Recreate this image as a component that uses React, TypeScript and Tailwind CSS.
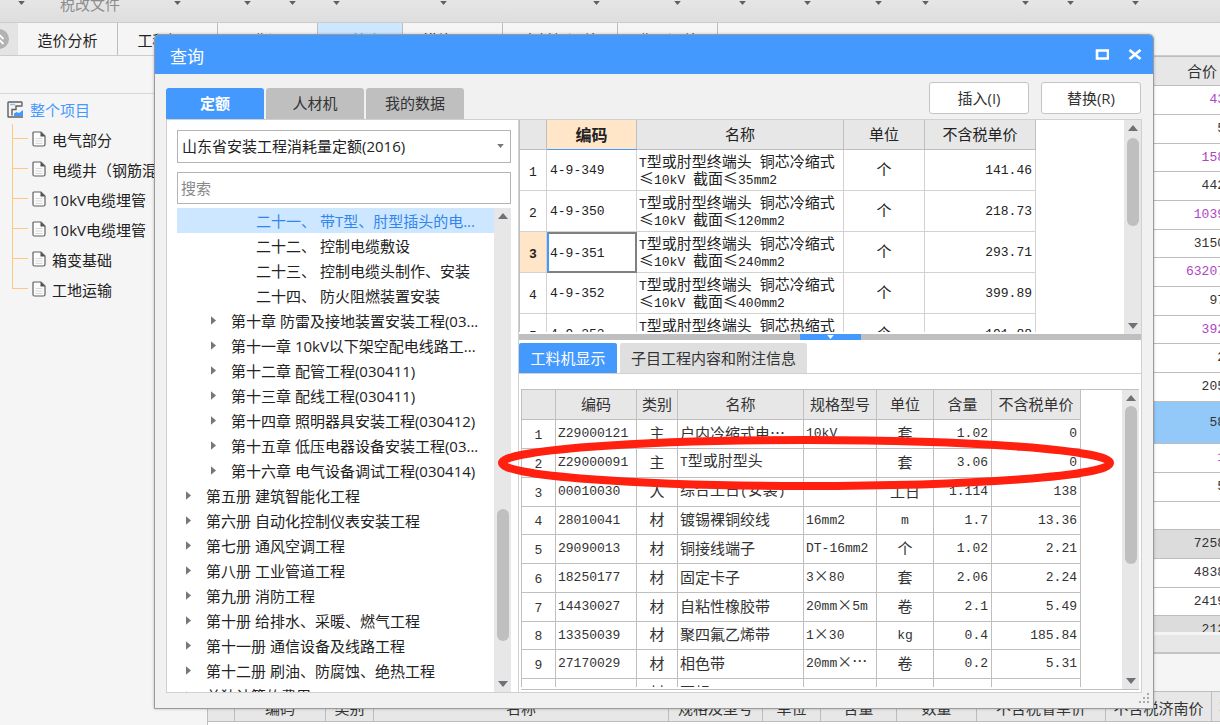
import React, { type ReactNode } from 'react';

const UI = "font-['Open_Sans','Noto_Sans_CJK_SC',sans-serif]";

/** Sets Latin runs in the narrow monospaced face and keeps CJK runs full width. */
function Mixed({ text }: { text: string }) {
  const runs = text.match(/[\x20-\x7e]+|[^\x20-\x7e]+/g) ?? [];
  return (
    <>
      {runs.map((run, i) =>
        /^[\x20-\x7e]/.test(run) ? (
          <span key={i} className="font-['Liberation_Mono',monospace] text-[13px] whitespace-pre">{run}</span>
        ) : (
          <span key={i} lang="zh-CN" className="font-['Noto_Sans_CJK_SC',sans-serif] text-[15px]">{run}</span>
        ),
      )}
    </>
  );
}

function Triangle({ dir, className = '' }: { dir: 'up' | 'down' | 'right'; className?: string }) {
  const d = dir === 'up' ? 'M0 6 5 0 10 6Z' : dir === 'down' ? 'M0 0H10L5 6Z' : 'M0 0V10L6 5Z';
  return (
    <svg viewBox={dir === 'right' ? '0 0 6 10' : '0 0 10 6'} className={className} fill="currentColor" aria-hidden="true">
      <path d={d} />
    </svg>
  );
}

function ScrollBar({ children }: { children: ReactNode }) {
  return (
    <div className="flex w-[17px] shrink-0 flex-col items-center bg-[#e7e7e7] py-[5px] text-[#707078]">
      <Triangle dir="up" className="h-[6px] w-[10px] shrink-0" />
      <div className="flex w-full flex-1 flex-col items-center">{children}</div>
      <Triangle dir="down" className="h-[6px] w-[10px] shrink-0" />
    </div>
  );
}

function PageIcon() {
  return (
    <svg viewBox="0 0 14 16" className="h-4 w-[14px] shrink-0" fill="none" aria-hidden="true">
      <path d="M1.500 1H9L13 5V13.500Q13 15 11.500 15H2.500Q1 15 1 13.500V2Q1 1 2 1Z" fill="#fbfbfb" stroke="#606060" strokeWidth="1.200" />
      <path d="M8.500 1V5.500H13Z" fill="#505050" />
      <path d="M3.500 7.500H10.500M3.500 10H10.500M3.500 12.500H10.500" stroke="#d8d8d8" />
    </svg>
  );
}

function ProjectIcon() {
  return (
    <svg viewBox="0 0 17 17" className="h-[17px] w-[17px] shrink-0" fill="none" aria-hidden="true">
      <path d="M15 4.500V1.500Q15 1 14.500 1H1.500Q1 1 1 1.500V15.500Q1 16 1.500 16H16" stroke="#606060" strokeWidth="1.400" />
      <path d="M3 3.500H8" stroke="#8cc0ff" strokeWidth="1.500" />
      <path d="M5 14.500V8.500H9V5H15.500" stroke="#606060" strokeWidth="1.400" />
      <path d="M7 15V12.500L9.500 11 12 12 16 9V15Z" fill="#4499ff" />
    </svg>
  );
}

const toolbarCells = ['', '税改文件', '', '', '', '', '', '', '', '', '', '', '', '', ''];

const moduleTabs = [
  { label: '造价分析', width: 'w-[100px]' },
  { label: '工程概况', width: 'w-[100px]' },
  { label: '取费设置', width: 'w-[100px]' },
  { label: '预算书', width: 'w-[85px]', active: true },
  { label: '措施项目', width: 'w-[100px]' },
  { label: '人材机汇总', width: 'w-[115px]' },
  { label: '费用汇总', width: 'w-[100px]' },
];

const projectNodes = ['电气部分', '电缆井（钢筋混', '10kV电缆埋管', '10kV电缆埋管', '箱变基础', '工地运输'];

const totals: { v: string; kind?: 'purple' | 'active' | 'sum' }[] = [
  { v: '43', kind: 'purple' }, { v: '5' }, { v: '158', kind: 'purple' }, { v: '442' },
  { v: '1039', kind: 'purple' }, { v: '3150' }, { v: '63207', kind: 'purple' }, { v: '97' },
  { v: '392', kind: 'purple' }, { v: '2' }, { v: '205' }, { v: '58', kind: 'active' },
  { v: '1', kind: 'purple' }, { v: '5' }, { v: '' }, { v: '7258', kind: 'sum' },
  { v: '4838' }, { v: '2419' }, { v: '212', kind: 'sum' },
];

const chapters: { level: 1 | 2 | 3; text: string; selected?: boolean }[] = [
  { level: 3, text: '二十一、 带T型、肘型插头的电...', selected: true },
  { level: 3, text: '二十二、 控制电缆敷设' },
  { level: 3, text: '二十三、 控制电缆头制作、安装' },
  { level: 3, text: '二十四、 防火阻燃装置安装' },
  { level: 2, text: '第十章 防雷及接地装置安装工程(03...' },
  { level: 2, text: '第十一章 10kV以下架空配电线路工...' },
  { level: 2, text: '第十二章 配管工程(030411)' },
  { level: 2, text: '第十三章 配线工程(030411)' },
  { level: 2, text: '第十四章 照明器具安装工程(030412)' },
  { level: 2, text: '第十五章 低压电器设备安装工程(03...' },
  { level: 2, text: '第十六章 电气设备调试工程(030414)' },
  { level: 1, text: '第五册 建筑智能化工程' },
  { level: 1, text: '第六册 自动化控制仪表安装工程' },
  { level: 1, text: '第七册 通风空调工程' },
  { level: 1, text: '第八册 工业管道工程' },
  { level: 1, text: '第九册 消防工程' },
  { level: 1, text: '第十册 给排水、采暖、燃气工程' },
  { level: 1, text: '第十一册 通信设备及线路工程' },
  { level: 1, text: '第十二册 刷油、防腐蚀、绝热工程' },
  { level: 1, text: '单独计算的费用' },
];

const indent = { 1: 'pl-[9px]', 2: 'pl-[34px]', 3: 'pl-[59px]' };

const quotas = [
  ['4-9-349', 'T型或肘型终端头 铜芯冷缩式', '≤10kV 截面≤35mm2', '141.46'],
  ['4-9-350', 'T型或肘型终端头 铜芯冷缩式', '≤10kV 截面≤120mm2', '218.73'],
  ['4-9-351', 'T型或肘型终端头 铜芯冷缩式', '≤10kV 截面≤240mm2', '293.71'],
  ['4-9-352', 'T型或肘型终端头 铜芯冷缩式', '≤10kV 截面≤400mm2', '399.89'],
  ['4-9-353', 'T型或肘型终端头 铜芯热缩式', '≤10kV 截面≤35mm2', '191.88'],
];

const resources = [
  ['Z29000121', '主', '户内冷缩式电…', '10kV', '套', '1.02', '0'],
  ['Z29000091', '主', 'T型或肘型头', '', '套', '3.06', '0'],
  ['00010030', '人', '综合工日(安装)', '', '工日', '1.114', '138'],
  ['28010041', '材', '镀锡裸铜绞线', '16mm2', 'm', '1.7', '13.36'],
  ['29090013', '材', '铜接线端子', 'DT-16mm2', '个', '1.02', '2.21'],
  ['18250177', '材', '固定卡子', '3×80', '套', '2.06', '2.24'],
  ['14430027', '材', '自粘性橡胶带', '20mm×5m', '卷', '2.1', '5.49'],
  ['13350039', '材', '聚四氟乙烯带', '1×30', 'kg', '0.4', '185.84'],
  ['27170029', '材', '相色带', '20mm×…', '卷', '0.2', '5.31'],
  ['14030041', '材', '石规', '', 'kg', '1', '7.41'],
];

const detailHeads = ['', '编码', '类别', '名称', '规格及型号', '单位', '含量', '数量', '不含税省单价', '不含税济南价', '不'];
const detailCols = ['w-[27px]', 'w-[91px]', 'w-[48px]', 'w-[295px]', 'w-[94px]', 'w-[58px]', 'w-[76px]', 'w-[80px]', 'w-[129px]', 'w-[106px]', 'w-[30px]'];

function Toolbar() {
  return (
    <div className="grid h-[22px] shrink-0 grid-cols-[25px_156px_70px_45px_44px_107px_153px_81px_65px_65px_71px_47px_100px_45px_65px] overflow-hidden bg-linear-to-b from-[#e6e6e6] to-[#dedede] text-[#606060]">
      {toolbarCells.map((label, i) => (
        <div key={i} className="flex h-[9px] items-center justify-end">
          {label && <span className="flex-1 pl-[35px] text-[15px] leading-[9px] text-[#8c8c8c]">{label}</span>}
          <Triangle dir="down" className="mt-[-3px] h-[4px] w-[7px]" />
        </div>
      ))}
    </div>
  );
}

function ModuleTabs() {
  return (
    <nav className="flex h-[34px] shrink-0 border-y border-[#cccccc] bg-[#f5f5f5]">
      <button type="button" aria-label="收起" className="flex w-[18px] shrink-0 items-center justify-end bg-[#e4e4e4] pr-[9px]">
        <svg viewBox="0 0 20 20" className="h-5 w-5 shrink-0" aria-hidden="true">
          <circle cx="10" cy="10" r="10" fill="#b2b2b2" />
          <path d="M5.500 10 10 5.500 14.500 10M5.500 15 10 10.500 14.500 15" fill="none" stroke="#fff" strokeWidth="1.800" />
        </svg>
      </button>
      {moduleTabs.map((t) => (
        <button
          key={t.label}
          type="button"
          className={`${t.width} shrink-0 border-r border-[#bdbdbd] pt-[3px] text-[15px] ${t.active ? 'bg-[#cce7ff] text-[#4499ff]' : 'text-[#222]'}`}
        >
          {t.label}
        </button>
      ))}
    </nav>
  );
}

function ProjectTree() {
  return (
    <aside className="w-[207px] shrink-0 overflow-hidden bg-[#f5f5f5]">
      <div className="h-[38px] border-b border-[#d6d6d6]" />
      <div className="flex h-[30px] items-center gap-[6px] pl-[7px] text-[15px] text-[#4499ff]">
        <ProjectIcon />
        <a href="#project" className="pt-[2px]">整个项目</a>
      </div>
      <ul className="pl-3">
        {projectNodes.map((name, i) => (
          <li key={i} className="flex h-[30px] text-[15px] whitespace-nowrap text-[#222]">
            <span className="w-4 shrink-0">
              <span className="block h-[15px] border-b border-l border-[#ffc880]" />
              {i < projectNodes.length - 1 && <span className="block h-[15px] border-l border-[#ffc880]" />}
            </span>
            <button type="button" className="flex items-center gap-[6px] pl-1">
              <PageIcon />
              <span className="pt-[2px]">{name}</span>
            </button>
          </li>
        ))}
      </ul>
    </aside>
  );
}

function TotalsGrid() {
  return (
    <div className="min-h-0 flex-1 overflow-hidden bg-white">
      <table className="w-[calc(100%+30px)] table-fixed border-separate border-spacing-0">
        <colgroup>
          <col />
          <col className="w-[96px]" />
        </colgroup>
        <thead>
          <tr className="h-[30px] bg-[#e7e7e7]">
            <th className="border-y border-[#bdbdbd]" />
            <th className="border-y border-[#bdbdbd] text-[15px] font-normal text-[#333]">合价</th>
          </tr>
        </thead>
        <tbody>
          {totals.map((r, i) => (
            <tr
              key={i}
              className={`${r.kind === 'active' ? 'h-[42px] bg-[#92c9f9]' : i % 3 === 2 ? 'h-[28px]' : 'h-[29px]'} ${r.kind === 'sum' ? 'bg-[#dcdcdc]' : ''} ${r.kind === 'purple' ? 'text-[#ad45c4]' : 'text-[#333]'}`}
            >
              <td className="border-b border-[#bdbdbd]" />
              <td className="border-b border-[#bdbdbd] pr-[25px] pb-[3px] text-right leading-5">
                <Mixed text={r.v} />
              </td>
            </tr>
          ))}
        </tbody>
      </table>
    </div>
  );
}

function DetailGrid() {
  return (
    <div className="h-[34px] shrink-0 overflow-hidden bg-white">
      <table className="w-[1034px] table-fixed border-separate border-spacing-0">
        <colgroup>
          {detailCols.map((w, i) => (
            <col key={i} className={w} />
          ))}
        </colgroup>
        <thead>
          <tr className="h-[31px] bg-[#e7e7e7]">
            {detailHeads.map((h, i) => (
              <th key={i} className="overflow-hidden border-y border-r border-[#bdbdbd] pt-[2px] text-[15px] leading-5 font-normal whitespace-nowrap text-[#333]">
                {h}
              </th>
            ))}
          </tr>
        </thead>
      </table>
    </div>
  );
}

function QuotaTree() {
  return (
    <section className="flex w-[352px] shrink-0 flex-col border-r border-[#d0d0d0] pt-[10px] pr-[7px] pl-[10px]">
      <label className="relative block">
        <span className="sr-only">定额库</span>
        <select className="h-[33px] w-full appearance-none border border-[#b4b4b4] bg-white pl-1 text-[15px] text-[#222]">
          <option>山东省安装工程消耗量定额(2016)</option>
        </select>
        <Triangle dir="down" className="absolute top-[14px] right-[7px] h-[4px] w-[7px] text-[#777]" />
      </label>
      <input
        aria-label="搜索"
        placeholder="搜索"
        className="mt-[9px] h-[32px] w-full border border-[#b4b4b4] bg-white pl-[3px] text-[15px] placeholder:text-[#888]"
      />
      <div className="mt-[4px] flex min-h-0 flex-1">
        <ul className="min-w-0 flex-1 overflow-hidden">
          {chapters.map((c) => (
            <li key={c.text} className={c.selected ? 'bg-[#cce7ff] text-[#3385ee]' : 'text-[#222]'}>
              <button type="button" className={`flex h-[25px] w-full items-center text-[15px] whitespace-nowrap ${indent[c.level]}`}>
                <span className="flex w-5 shrink-0">
                  {c.level < 3 && <Triangle dir="right" className="h-[9px] w-[5px] text-[#777]" />}
                </span>
                <span className="pt-[2px]">{c.text}</span>
              </button>
            </li>
          ))}
        </ul>
        <ScrollBar>
          <div className="flex-[22]" />
          <div className="w-[12px] flex-[10] rounded-full bg-[#bfbfbf]" />
          <div className="flex-[3]" />
        </ScrollBar>
      </div>
    </section>
  );
}

const line = 'border-r border-b border-[#d2d2d2]';
const head = 'border-r border-b border-[#bfbfbf] bg-[#e7e7e7] font-normal text-[15px] whitespace-nowrap';

function QuotaGrid() {
  return (
    <div className="flex h-[214px] shrink-0">
      <div className="mb-[2px] min-w-0 flex-1 overflow-hidden">
        <table className="w-[516px] table-fixed border-separate border-spacing-0 border-l border-[#bfbfbf] text-[#222]">
          <colgroup>
            <col className="w-[27px]" />
            <col className="w-[90px]" />
            <col className="w-[207px]" />
            <col className="w-[81px]" />
            <col className="w-[111px]" />
          </colgroup>
          <thead>
            <tr className="h-[30px]">
              <th className={head} />
              <th className="border-r border-b border-r-[#bfbfbf] border-b-[#4499ff] bg-[#ffe6c8] text-[16px] font-bold">编码</th>
              <th className={head}>名称</th>
              <th className={head}>单位</th>
              <th className={head}>不含税单价</th>
            </tr>
          </thead>
          <tbody>
            {quotas.map(([code, l1, l2, price], i) => (
              <tr key={code} className="h-[41px]">
                <td className={`${line} text-center ${i === 2 ? 'bg-[#ffe6c8] font-bold' : ''}`}>
                  <Mixed text={String(i + 1)} />
                </td>
                <td className={`pb-[3px] ${i === 2 ? 'border-2 border-[#808080] border-l-[#4499ff] pl-px' : `${line} pl-[3px]`}`}>
                  <Mixed text={code} />
                </td>
                <td className={`${line} pb-[3px] pl-[2px] leading-[17px] whitespace-nowrap`}>
                  <div className="h-[17px]"><Mixed text={l1} /></div>
                  <div className="h-[17px]"><Mixed text={l2} /></div>
                </td>
                <td className={`${line} pb-[3px] text-center`}><Mixed text="个" /></td>
                <td className={`${line} pr-[3px] pb-[3px] text-right`}><Mixed text={price} /></td>
              </tr>
            ))}
          </tbody>
        </table>
      </div>
      <ScrollBar>
        <div className="mt-[7px] h-[88px] w-[12px] rounded-full bg-[#bfbfbf]" />
      </ScrollBar>
    </div>
  );
}

function ResourceGrid() {
  return (
    <div className="mx-[2px] mb-[2px] flex min-h-0 flex-1 border-y border-[#bfbfbf]">
      <div className="mb-[2px] min-w-0 flex-1 overflow-hidden">
        <table className="w-[559px] table-fixed border-separate border-spacing-0 border-l border-[#bfbfbf] text-[#333]">
          <colgroup>
            <col className="w-[34px]" />
            <col className="w-[81px]" />
            <col className="w-[41px]" />
            <col className="w-[126px]" />
            <col className="w-[73px]" />
            <col className="w-[57px]" />
            <col className="w-[58px]" />
            <col className="w-[89px]" />
          </colgroup>
          <thead>
            <tr className="h-[30px]">
              {['', '编码', '类别', '名称', '规格型号', '单位', '含量', '不含税单价'].map((h) => (
                <th key={h} className={head}>{h}</th>
              ))}
            </tr>
          </thead>
          <tbody>
            {resources.map((r, i) => (
              <tr key={r[0]} className={`${i % 4 === 3 ? 'h-[28px]' : 'h-[29px]'} leading-5 whitespace-nowrap`}>
                <td className="border-r border-b border-[#bfbfbf] text-center">
                  {i < 9 && <Mixed text={String(i + 1)} />}
                </td>
                {r.map((v, c) => (
                  <td
                    key={c}
                    className={`border-r border-b border-[#bfbfbf] pb-[3px] ${c === 1 || c === 4 ? 'text-center' : c > 4 ? 'pr-[3px] text-right' : 'pl-[2px]'}`}
                  >
                    <Mixed text={v} />
                  </td>
                ))}
              </tr>
            ))}
          </tbody>
        </table>
      </div>
      <ScrollBar>
        <div className="mt-[5px] h-[158px] w-[12px] rounded-full bg-[#bfbfbf]" />
      </ScrollBar>
    </div>
  );
}

function QueryDialog() {
  return (
    <div
      role="dialog"
      aria-label="查询"
      className="absolute top-[34px] right-[66px] bottom-[16px] left-[154px] flex flex-col overflow-hidden rounded-t-[5px] border border-[#9a9a9a] bg-[#f1f1f1] shadow-[0_0_3px_rgba(0,0,0,0.25)]"
    >
      <header className="flex h-[39px] shrink-0 items-center justify-between bg-[#4499ff] pr-[11px] pl-[15px] text-white">
        <h1 className="pt-1 text-[17px]">查询</h1>
        <div className="flex gap-[19px]">
          <button type="button" aria-label="最大化">
            <svg viewBox="0 0 14 12" className="h-3 w-[14px]" aria-hidden="true">
              <path d="M2 1.500H13V9.500H2Z" fill="none" stroke="#fff" strokeWidth="2.600" />
            </svg>
          </button>
          <button type="button" aria-label="关闭">
            <svg viewBox="0 0 14 12" className="h-3 w-[14px]" aria-hidden="true">
              <path d="M1.500 1 12.500 10M12.500 1 1.500 10" fill="none" stroke="#fff" strokeWidth="2.700" />
            </svg>
          </button>
        </div>
      </header>

      <div className="flex h-[45px] shrink-0 items-end justify-between pr-[12px] pl-[11px]">
        <div className="flex gap-[2px] text-[15px]">
          <button type="button" className="h-[31px] w-[98px] rounded-t-[3px] bg-[#4499ff] font-bold text-white">定额</button>
          <button type="button" className="h-[31px] w-[98px] rounded-t-[3px] bg-[#bfbfbf] text-[#333]">人材机</button>
          <button type="button" className="h-[31px] w-[98px] rounded-t-[3px] bg-[#bfbfbf] text-[#333]">我的数据</button>
        </div>
        <div className="flex gap-3 pb-[5px] text-[15px] text-[#333]">
          <button type="button" className="h-[32px] w-[100px] rounded-[3px] border border-[#c4c4c4] bg-white">插入(I)</button>
          <button type="button" className="h-[32px] w-[100px] rounded-[3px] border border-[#c4c4c4] bg-white">替换(R)</button>
        </div>
      </div>

      <div className="mx-[11px] mb-[15px] flex min-h-0 flex-1 border border-[#d0d0d0] bg-white">
        <QuotaTree />
        <section className="flex min-w-0 flex-1 flex-col">
          <QuotaGrid />
          <div className="flex h-[6px] shrink-0 justify-center bg-[#bfbfbf]">
            <div className="flex w-[61px] items-center justify-center bg-[#4499ff] text-white">
              <Triangle dir="down" className="h-[4px] w-[7px]" />
            </div>
          </div>
          <div className="mt-[3px] flex shrink-0 gap-[3px] border-b border-[#d0d0d0] text-[15px]">
            <button type="button" className="h-[30px] w-[98px] rounded-t-[2px] bg-[#4499ff] text-white">工料机显示</button>
            <button type="button" className="h-[30px] w-[187px] rounded-t-[2px] bg-[#dfdfdf] text-[#333]">子目工程内容和附注信息</button>
          </div>
          <div className="h-[15px] shrink-0" />
          <ResourceGrid />
        </section>
      </div>

      <svg viewBox="0 0 11 11" className="absolute right-[3px] bottom-[4px] h-[11px] w-[11px]" fill="#aaa" aria-hidden="true">
        <path d="M8 0h2v2H8zM8 4h2v2H8zM4 4h2v2H4zM8 8h2v2H8zM4 8h2v2H4zM0 8h2v2H0z" />
      </svg>
    </div>
  );
}

export default function App() {
  return (
    <div lang="zh-CN" className={`relative flex h-screen w-full flex-col overflow-hidden bg-[#f5f5f5] ${UI}`}>
      <Toolbar />
      <ModuleTabs />
      <div className="flex min-h-0 flex-1">
        <ProjectTree />
        <main className="flex min-w-0 flex-1 flex-col overflow-hidden border-l border-[#bdbdbd]">
          <TotalsGrid />
          <div className="mt-[3px] h-[19px] shrink-0 border-b-2 border-[#c4c4c4] bg-[#e7e7e7]" />
          <div className="h-[37px] shrink-0" />
          <DetailGrid />
        </main>
      </div>
      <QueryDialog />
      <svg viewBox="0 0 618 56" className="pointer-events-none absolute top-[435px] left-[497px] h-[56px] w-[618px]" fill="none" aria-hidden="true">
        <ellipse cx="309" cy="28" rx="304" ry="23" stroke="#ff2010" strokeWidth="8" />
      </svg>
    </div>
  );
}
